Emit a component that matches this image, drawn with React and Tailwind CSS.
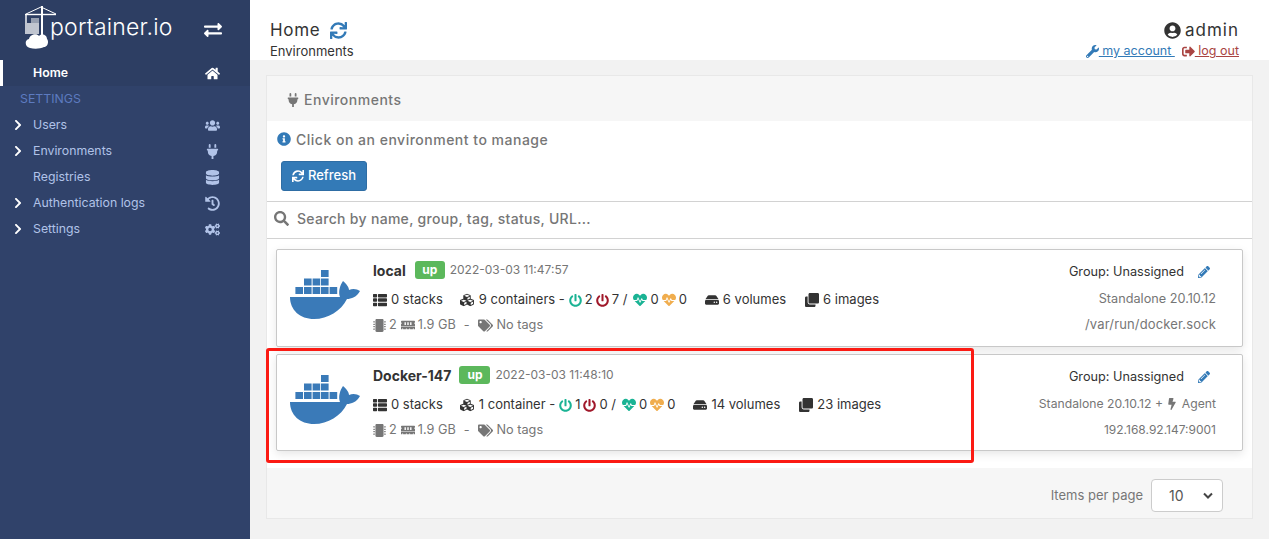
import React from "react";
import {
  FaHome, FaUsers, FaPlug, FaDatabase, FaHistory, FaCogs, FaExchangeAlt, FaChevronRight, FaSync,
  FaUserCircle, FaWrench, FaSignOutAlt, FaInfoCircle, FaSearch, FaThList, FaCubes, FaPowerOff,
  FaHeartbeat, FaHdd, FaClone, FaMicrochip, FaMemory, FaTags, FaBolt, FaPencilAlt,
} from "react-icons/fa";

function Whale() {
  const boxes = [[31,0],[14,8.5],[22.6,8.5],[31,8.5],[5.4,17],[14,17],[22.6,17],[31,17],[39.6,17]];
  return (
    <svg width="70" height="49" viewBox="0 0 70 49" className="shrink-0">
      {boxes.map(([x, y]) => <rect key={x + "-" + y} x={x} y={y} width="7.6" height="7" fill="#3a7ab8" />)}
      <path d="M0 27 L50 27 C48 22 50 15 53 11 C57 14 59 18 59 20 C63 18 67 19 70 21 C67 27 61 29 57 29 C51 41 38 49 24 49 C10 49 0 40 0 27 Z" fill="#3a7ab8" />
    </svg>
  );
}

function Logo() {
  return (
    <svg width="32" height="43" viewBox="0 0 32 43" className="shrink-0">
      <g stroke="#fff" fill="none">
        <path d="M1 8 L16 1 L31 8" strokeWidth="1" />
        <path d="M0 8.5 H31" strokeWidth="1.4" />
        <path d="M1 8.5 V28" strokeWidth="1.4" />
        <path d="M17 0 V31" strokeWidth="2" />
      </g>
      <rect x="2" y="17" width="12" height="11" fill="#fff" opacity="0.7" />
      <rect x="6" y="12" width="8" height="5" fill="#fff" opacity="0.5" />
      <path d="M5 42 C0 41 -1 34 4 33 C5 28 12 27 14 30 C17 27 22 29 22 33 C24 35 23 41 19 41 C15 43 9 43 5 42 Z" fill="#fff" />
    </svg>
  );
}

function NavRow({ label, icon, chevron, active }) {
  return (
    <div className={"h-[26px] flex items-center text-[12.3px] " + (active ? "bg-[#2d3e63] text-white border-l-[3px] border-white pl-[30px] font-semibold" : "text-[#b1c3e8] pl-[33px]") + " relative pr-[29px]"}>
      {chevron && <FaChevronRight className="absolute left-[12px] top-[7px] text-white text-[12px]" />}
      <span className="flex-1">{label}</span>
      <span className="w-[17px] flex justify-center text-[15px]">{icon}</span>
    </div>
  );
}

function Sidebar() {
  return (
    <aside className="w-[250px] shrink-0 bg-[#30426a]">
      <div className="h-[60px] bg-[#2d3e63] flex items-start pl-[25px] pt-[6px] relative">
        <Logo />
        <span className="text-white text-[23px] font-light tracking-[0.2px] -ml-[7px] mt-[6px] leading-[30px]">portainer.io</span>
        <FaExchangeAlt className="absolute left-[204px] top-[21px] text-white text-[18px]" />
      </div>
      <NavRow label="Home" icon={<FaHome />} active />
      <div className="h-[26px] flex items-center pl-[20px] text-[12.3px] text-[#5d7bc0]">SETTINGS</div>
      <NavRow label="Users" icon={<FaUsers />} chevron />
      <NavRow label="Environments" icon={<FaPlug />} chevron />
      <NavRow label="Registries" icon={<FaDatabase />} />
      <NavRow label="Authentication logs" icon={<FaHistory />} chevron />
      <NavRow label="Settings" icon={<FaCogs />} chevron />
    </aside>
  );
}

function Header() {
  return (
    <header className="h-[60px] bg-white flex justify-between pl-[20px] pr-[30px] text-[#333]">
      <div>
        <div className="flex items-center gap-[10px] pt-[19px] h-[41px] text-[17px] tracking-[0.7px] leading-[22px]">
          Home <FaSync className="text-[#337ab7] text-[17px]" />
        </div>
        <div className="text-[13px] leading-[18px] mt-[1px]">Environments</div>
      </div>
      <div className="flex flex-col items-end">
        <div className="flex items-center gap-[4px] pt-[19px] h-[41px] text-[17px] tracking-[1px] leading-[22px]">
          <FaUserCircle className="text-[17px]" /> admin
        </div>
        <div className="text-[12.5px] leading-[18px] flex items-center mt-[1px]">
          <FaWrench className="text-[#337ab7] text-[13px]" />
          <span className="text-[#337ab7] underline whitespace-pre"> my account </span>
          <FaSignOutAlt className="text-[#a94442] text-[13px] ml-[7px]" />
          <span className="text-[#a94442] underline whitespace-pre"> log out</span>
        </div>
      </div>
    </header>
  );
}

function EnvCard({ name, nameGap, time, badgeW, containers, up, down, volumes, images, line2, line3, h }) {
  return (
    <div className={"border border-[#c8c8c8] rounded-[2px] bg-white shadow-[0_3px_10px_rgba(0,0,0,0.1)] flex pl-[13px] pr-[26px] " + h}>
      <div className="w-[83px] pt-[20px] shrink-0"><Whale /></div>
      <div className="flex-1 text-[13px] text-[#333]">
        <div className="h-[20px] mt-[10px] flex items-center">
          <span className={"font-bold text-[14px] " + nameGap}>{name}</span>
          <span className={"h-[18px] rounded-[3px] bg-[#5cb85c] text-white font-bold text-[12px] flex items-center justify-center mr-[5px] " + badgeW}>up</span>
          <span className="text-[#767676] text-[12px]">{time}</span>
        </div>
        <div className="h-[20px] mt-[10px] flex items-center">
          <FaThList className="text-[14px] mr-[4px]" />
          <span className="mr-[17px]">0 stacks</span>
          <FaCubes className="text-[14px] mr-[5px]" />
          <span className="mr-[4px]">{containers} -</span>
          <FaPowerOff className="text-[#1ab394] text-[13px] mr-[3px]" />
          <span className="mr-[3px]">{up}</span>
          <FaPowerOff className="text-[#a0182a] text-[13px] mr-[3px]" />
          <span className="mr-[6px]">{down} /</span>
          <FaHeartbeat className="text-[#1ab394] text-[14px] mr-[3px]" />
          <span className="mr-[3px]">0</span>
          <FaHeartbeat className="text-[#f0ad4e] text-[14px] mr-[3px]" />
          <span className="mr-[18px]">0</span>
          <FaHdd className="text-[14px] mr-[4px]" />
          <span className="mr-[19px]">{volumes}</span>
          <FaClone className="text-[14px] mr-[4px]" />
          <span>{images}</span>
        </div>
        <div className="h-[20px] mt-[5px] flex items-center text-[12.7px] text-[#767676]">
          <FaMicrochip className="text-[13px] mr-[3px]" />
          <span className="mr-[4px]">2</span>
          <FaMemory className="text-[14px] mr-[3px]" />
          <span className="mr-[8px]">1.9 GB</span>
          <span className="mr-[8px]">-</span>
          <FaTags className="text-[15px] mr-[4px]" />
          <span>No tags</span>
        </div>
      </div>
      <div className="flex flex-col items-end text-[12.7px] text-[#767676]">
        <div className="h-[20px] mt-[12px] flex items-center text-[#333]">
          Group: Unassigned
          <FaPencilAlt className="text-[#337ab7] text-[12px] ml-[14px] mr-[6px]" />
        </div>
        <div className="h-[20px] mt-[7px] flex items-center">{line2}</div>
        <div className="h-[20px] mt-[6px] flex items-center">{line3}</div>
      </div>
    </div>
  );
}

function Panel() {
  return (
    <section className="mx-[16px] mt-[15px] border border-[#e8e8e8] bg-white">
      <div className="h-[45px] bg-[#f6f6f6] flex items-center pl-[19px] pt-[2px] text-[14px] font-medium tracking-[0.5px] text-[#767676]">
        <FaPlug className="text-[14px] mr-[4px]" /> Environments
      </div>
      <div className="h-[72px] pt-[8px] border-b border-[#d2d2d2] box-content">
        <div className="flex items-center pl-[10px] h-[20px] text-[14px] font-medium tracking-[0.5px] text-[#767676]">
          <FaInfoCircle className="text-[#337ab7] text-[14px] mr-[5px]" /> Click on an environment to manage
        </div>
        <div className="mt-[12px] ml-[14px] w-[86px] h-[30px] bg-[#337ab7] border border-[#2e6da4] rounded-[3px] text-white text-[13px] font-medium flex items-center justify-center gap-[4px]">
          <FaSync className="text-[12px]" /> Refresh
        </div>
      </div>
      <div className="h-[37px] pb-[3px] box-border border-b border-[#d2d2d2] flex items-center pl-[7px] text-[14px] font-medium tracking-[0.3px] text-[#767676]">
        <FaSearch className="text-[15px] mr-[8px]" /> Search by name, group, tag, status, URL...
      </div>
      <div className="px-[9px] pt-[10px] pb-[17px] flex flex-col gap-[7px]">
        <EnvCard h="h-[98px]" name="local" nameGap="mr-[9px]" time="2022-03-03 11:47:57" badgeW="w-[30px]" containers="9 containers" up="2" down="7" volumes="6 volumes" images="6 images" line2="Standalone 20.10.12" line3={<span className="tracking-[0.15px] text-[13px]">/var/run/docker.sock</span>} />
        <EnvCard h="h-[97px]" name="Docker-147" nameGap="mr-[8px]" time="2022-03-03 11:48:10" badgeW="w-[31px]" containers="1 container" up="1" down="0" volumes="14 volumes" images="23 images"
          line2={<span className="flex items-center text-[12.2px]">Standalone 20.10.12 +&nbsp;<FaBolt className="text-[12px]" />&nbsp;Agent</span>} line3={<span className="text-[12px]">192.168.92.147:9001</span>} />
      </div>
      <div className="h-[50px] bg-[#f6f6f6] flex items-center justify-end pr-[29px] pt-[5px] text-[13px] text-[#767676]">
        Items per page
        <div className="ml-[8px] w-[72px] h-[33px] bg-white border border-[#ccc] rounded-[4px] flex items-center justify-between pl-[17px] pr-[9px] text-[14px] text-[#555]">
          10 <svg width="10" height="7" viewBox="0 0 10 7"><path d="M1 1.5 L5 5.5 L9 1.5" stroke="#444" strokeWidth="2" fill="none" /></svg>
        </div>
      </div>
    </section>
  );
}

export default function App() {
  return (
    <div className="relative h-[539px] w-[1269px] overflow-hidden flex bg-[#f2f2f2] [font-family:Inter,sans-serif]">
      <Sidebar />
      <main className="flex-1 min-w-0">
        <Header />
        <Panel />
      </main>
      <div className="absolute left-[266px] top-[348px] w-[708px] h-[115px] border-[3px] border-[#fb1a13] rounded-[3px]" />
    </div>
  );
}
